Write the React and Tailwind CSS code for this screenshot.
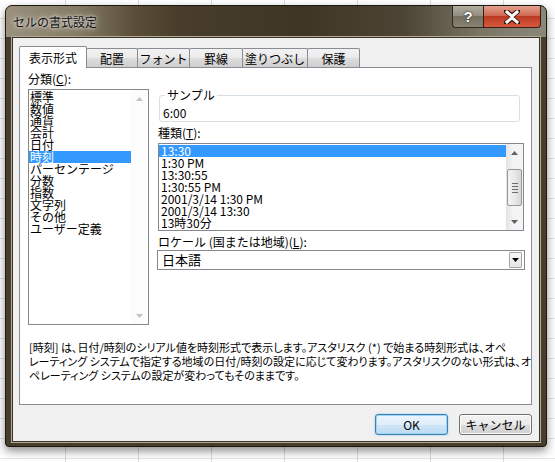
import React from 'react';

const FONT = "font-['Noto_Sans_CJK_JP','Noto_Sans',sans-serif]";

const CATEGORIES = ['標準', '数値', '通貨', '会計', '日付', '時刻', 'パーセンテージ', '分数', '指数', '文字列', 'その他', 'ユーザー定義'];
const TYPES = ['13:30', '1:30 PM', '13:30:55', '1:30:55 PM', '2001/3/14 1:30 PM', '2001/3/14 13:30', '13時30分'];
const TABS = [
  { label: '表示形式', w: 'w-[68px]' },
  { label: '配置', w: 'w-[52px]' },
  { label: 'フォント', w: 'w-[53px]' },
  { label: '罫線', w: 'w-[54px]' },
  { label: '塗りつぶし', w: 'w-[66px]' },
  { label: '保護', w: 'w-[53px]' },
];

function Arrow({ down = false, color = '#606060' }) {
  return (
    <svg width="7" height="4" viewBox="0 0 7 4" aria-hidden>
      {down ? <path d="M0 0H7L3.5 4Z" fill={color} /> : <path d="M0 4L3.5 0L7 4Z" fill={color} />}
    </svg>
  );
}

function CloseGlyph() {
  return (
    <svg width="16" height="14" viewBox="0 0 16 14" aria-hidden>
      <path d="M2 1L8 6L14 1M2 13L8 8L14 13" stroke="#3a1a12" strokeWidth="5" fill="none" strokeLinecap="round" />
      <path d="M3 2L8 6.3L13 2M3 12L8 7.7L13 12" stroke="#ffffff" strokeWidth="3" fill="none" strokeLinecap="square" />
    </svg>
  );
}

function Tab({ label, w, active }) {
  if (active) {
    return (
      <div className={`relative z-10 -mb-px flex h-[22px] ${w} items-center justify-center rounded-t-[2px] border border-b-0 border-[#898c95] bg-white text-[12px] text-black`}>
        {label}
      </div>
    );
  }
  return (
    <div className={`-ml-px flex h-[19px] ${w} items-center justify-center rounded-t-[2px] border border-b-0 border-[#898c95] bg-[linear-gradient(#f2f2f2,#ebebeb_50%,#dddddd_50%,#cfcfcf)] pt-px text-[12px] text-black`}>
      {label}
    </div>
  );
}

function CategoryList() {
  return (
    <div className="flex h-[236px] w-[121px] border border-[#828790] bg-white">
      <ul className="flex-1 pt-px">
        {CATEGORIES.map((c) => (
          <li
            key={c}
            className={`h-[12px] pl-px text-[12px] leading-[12px] whitespace-nowrap ${c === '時刻' ? 'bg-[#3399ff] text-white' : 'text-black'}`}
          >
            {c}
          </li>
        ))}
      </ul>
      <div className="flex w-[17px] flex-col justify-between bg-[#fcfcfc]">
        <div className="flex h-[17px] items-center justify-center">
          <Arrow color="#c4c4c4" />
        </div>
        <div className="flex h-[17px] items-center justify-center">
          <Arrow down color="#c4c4c4" />
        </div>
      </div>
    </div>
  );
}

function TypeList() {
  return (
    <div className="flex h-[88px] w-[366px] border border-[#828790] bg-white">
      <ul className="flex-1 pt-px">
        {TYPES.map((t, i) => (
          <li
            key={t}
            className={`h-[12px] pl-[2px] text-[12px] leading-[12px] whitespace-nowrap ${i === 0 ? 'bg-[#3399ff] text-white' : 'text-black'}`}
          >
            {t}
          </li>
        ))}
      </ul>
      <div className="flex w-[17px] flex-col bg-[linear-gradient(90deg,#e3e3e3,#f4f4f4_40%,#f4f4f4)]">
        <div className="flex h-[17px] items-center justify-center">
          <Arrow />
        </div>
        <div className="flex-1 pt-[8px]">
          <div className="mx-auto flex h-[37px] w-[15px] flex-col items-center justify-center gap-[2px] rounded-[2px] border border-[#979797] bg-[linear-gradient(90deg,#f3f3f3,#e8e8e8_50%,#d6d6d6)]">
            <span className="h-px w-[6px] bg-[#6b6b6b]" />
            <span className="h-px w-[6px] bg-[#6b6b6b]" />
            <span className="h-px w-[6px] bg-[#6b6b6b]" />
            <span className="h-px w-[6px] bg-[#6b6b6b]" />
          </div>
        </div>
        <div className="flex h-[17px] items-center justify-center">
          <Arrow down />
        </div>
      </div>
    </div>
  );
}

export default function App() {
  return (
    <div
      className={`h-[462px] w-[555px] overflow-hidden bg-white bg-[linear-gradient(90deg,#d9dbde_1px,transparent_1px),linear-gradient(#e4e6e8_1px,transparent_1px)] bg-[size:73px_20px] bg-[position:-8px_-2px] pt-[5px] pl-[5px] ${FONT}`}
    >
      {/* dialog window */}
      <div className="flex h-[442px] w-[542px] flex-col rounded-t-[7px] rounded-b-[4px] border border-[#1c1810] bg-[#463d2c] shadow-[0_4px_10px_rgba(0,0,0,0.45)]">
        {/* title bar */}
        <div className="flex h-[31px] items-start justify-between rounded-t-[6px] bg-[linear-gradient(90deg,#9a917e_0%,#857b66_13%,#5a4e39_24%,#473d2a_32%,#3f3523_55%,#4d4535_74%,#7a7565_88%,#8a877b_100%)] pr-[5px] pl-[7px]">
          <span className="pt-[9px] text-[12px] leading-[14px] text-[#111] [text-shadow:0_0_6px_rgba(255,255,255,0.9),0_0_3px_rgba(255,255,255,0.8)]">
            セルの書式設定
          </span>
          <div className="flex">
            <div className="flex h-[22px] w-[32px] items-center justify-center rounded-bl-[4px] border border-t-0 border-[#2e2a20] bg-[linear-gradient(#b1ad9f,#948f80_45%,#76715f_50%,#878271)] font-['Liberation_Sans',sans-serif] text-[15px] leading-none font-bold text-white [text-shadow:0_0_2px_#222,0_0_1px_#222]">
              ?
            </div>
            <div className="-ml-px flex h-[22px] w-[58px] items-center justify-center rounded-br-[4px] border border-t-0 border-[#3b1a12] bg-[linear-gradient(#e4a08f,#cf6a53_45%,#bb3a22_50%,#d65a3e)]">
              <CloseGlyph />
            </div>
          </div>
        </div>

        {/* client area */}
        <div className="px-[6px] pb-[4px]">
          <div className="flex h-[405px] flex-col border border-[#3a3325] bg-[#f0f0f0] shadow-[0_0_0_1px_#b3ab96]">
            {/* tabs */}
            <div className="flex h-[29px] items-end pt-[8px] pl-[6px]">
              {TABS.map((t, i) => (
                <Tab key={t.label} label={t.label} w={t.w} active={i === 0} />
              ))}
            </div>

            {/* tab panel */}
            <div className="ml-[6px] flex h-[338px] w-[513px] flex-col border border-[#898c95] bg-white text-[12px] text-black">
              <div className="flex">
                <div className="pt-[5px] pl-[8px]">
                  <div className="h-[12px] leading-[12px]">
                    分類(<span className="underline">C</span>):
                  </div>
                  <div className="mt-[4px]">
                    <CategoryList />
                  </div>
                </div>

                <div className="ml-[9px] flex w-[366px] flex-col pt-[21px]">
                  <fieldset className="mr-[4px] ml-px rounded-[3px] border border-[#d5dfe5] pb-[2px] pl-[3px]">
                    <legend className="ml-[2px] px-[2px] text-[12px] leading-[12px]">サンプル</legend>
                    <div className="mt-[6px] h-[12px] text-[12px] leading-[12px]">6:00</div>
                  </fieldset>
                  <div className="mt-[5px] h-[12px] leading-[12px]">
                    種類(<span className="underline">T</span>):
                  </div>
                  <div className="mt-[4px]">
                    <TypeList />
                  </div>
                  <div className="mt-[5px] h-[12px] leading-[12px] whitespace-nowrap">
                    ロケール (国または地域)(<span className="underline">L</span>):
                  </div>
                  <div className="mt-[2px] -ml-px flex h-[20px] w-[368px] items-center border border-[#828790] bg-white">
                    <span className="flex-1 pl-[4px] text-[13px] leading-[14px]">日本語</span>
                    <div className="mr-[2px] flex h-[16px] w-[13px] items-center justify-center rounded-[1px] border border-[#a5a5a5] bg-[linear-gradient(#f7f7f7,#e6e6e6)]">
                      <Arrow down color="#000" />
                    </div>
                  </div>
                </div>
              </div>

              <div className="mt-[15px] pl-[9px] text-[11px] leading-[14px] whitespace-pre [font-feature-settings:'palt']">
                <div>[時刻] は、日付/時刻のシリアル値を時刻形式で表示します。アスタリスク (*) で始まる時刻形式は、オペ</div>
                <div>レーティング システムで指定する地域の日付/時刻の設定に応じて変わります。アスタリスクのない形式は、オ</div>
                <div>ペレーティング システムの設定が変わってもそのままです。</div>
              </div>
            </div>

            {/* buttons */}
            <div className="mt-[9px] flex justify-end gap-[11px] pr-[7px]">
              <button
                type="button"
                className="flex h-[21px] w-[73px] items-center justify-center rounded-[3px] border border-[#3c7fb1] bg-[linear-gradient(#eaf5fc,#e1eefa_50%,#cfe5f7_50%,#bcdcf4)] text-[12px] text-black shadow-[inset_0_0_0_1px_#9fd4f5,0_0_2px_#7cc3ee]"
              >
                OK
              </button>
              <button
                type="button"
                className="flex h-[21px] w-[73px] items-center justify-center rounded-[3px] border border-[#707070] bg-[linear-gradient(#f2f2f2,#ebebeb_50%,#dddddd_50%,#cfcfcf)] text-[12px] text-black shadow-[inset_0_0_0_1px_#fcfcfc]"
              >
                キャンセル
              </button>
            </div>
          </div>
        </div>
      </div>
    </div>
  );
}
